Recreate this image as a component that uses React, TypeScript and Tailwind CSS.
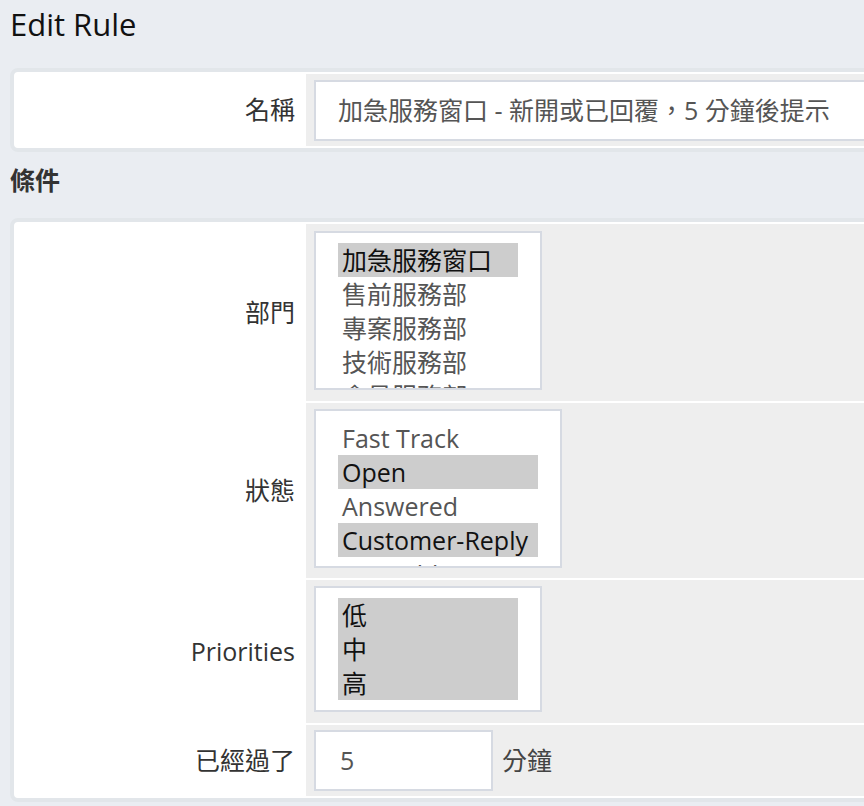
const font = { fontFamily: '"Open Sans", "Noto Sans CJK TC", sans-serif' };

function Label({ children }: { children: React.ReactNode }) {
  return (
    <div className="w-[288px] shrink-0 flex items-center justify-end pr-[9px] text-[25px] text-[#333]">
      {children}
    </div>
  );
}

function ListBox({ items, selected, width }: { items: string[]; selected: number[]; width: string }) {
  return (
    <div className={`${width} h-[159px] border-2 border-[#d6dae2] bg-white px-[22px] pt-[10px] overflow-hidden`}>
      {items.map((item, i) => (
        <div
          key={item}
          className={`h-[34px] leading-[34px] pl-[4px] text-[25px] whitespace-nowrap ${
            selected.includes(i) ? "bg-[#cdcdcd] text-[#111]" : "text-[#555]"
          }`}
        >
          {item}
        </div>
      ))}
    </div>
  );
}

export default function App() {
  return (
    <div className="min-h-screen w-full overflow-hidden bg-[#eaedf2]" style={font}>
      <div className="w-[1000px] pl-[10px]">
        <h1 className="pt-[4px] h-[44px] leading-[40px] text-[31px] text-[#111] mb-[24px]">Edit Rule</h1>

        <div className="border-4 border-[#e2e6ea] rounded-lg bg-white p-[2px]">
          <div className="flex gap-[2px]">
            <Label>名稱</Label>
            <div className="flex-1 bg-[#eeeeee] px-[8px] pt-[6px] pb-[5px]">
              <div className="w-[640px] h-[61px] border-2 border-[#d6dae2] bg-white pl-[22px] flex items-center text-[25px] text-[#555] whitespace-nowrap">
                加急服務窗口 - 新開或已回覆，5 分鐘後提示
              </div>
            </div>
          </div>
        </div>

        <h2 className="mt-[10px] h-[36px] leading-[36px] text-[25px] font-bold text-[#333] mb-[20px]">條件</h2>

        <div className="border-4 border-[#e2e6ea] rounded-lg bg-white p-[2px] flex flex-col gap-[2px]">
          <div className="flex gap-[2px]">
            <Label>部門</Label>
            <div className="flex-1 bg-[#eeeeee] px-[8px] pt-[7px] pb-[11px]">
              <ListBox
                width="w-[228px]"
                items={["加急服務窗口", "售前服務部", "專案服務部", "技術服務部", "會員服務部"]}
                selected={[0]}
              />
            </div>
          </div>
          <div className="flex gap-[2px]">
            <Label>狀態</Label>
            <div className="flex-1 bg-[#eeeeee] px-[8px] pt-[6px] pb-[10px]">
              <ListBox
                width="w-[248px]"
                items={["Fast Track", "Open", "Answered", "Customer-Reply", "On Hold"]}
                selected={[1, 3]}
              />
            </div>
          </div>
          <div className="flex gap-[2px]">
            <Label>Priorities</Label>
            <div className="flex-1 bg-[#eeeeee] px-[8px] pt-[6px] pb-[11px]">
              <div className="w-[228px] h-[126px] border-2 border-[#d6dae2] bg-white px-[22px] pt-[10px]">
                {["低", "中", "高"].map((p) => (
                  <div key={p} className="h-[34px] leading-[34px] pl-[4px] text-[25px] bg-[#cdcdcd] text-[#111]">
                    {p}
                  </div>
                ))}
              </div>
            </div>
          </div>
          <div className="flex gap-[2px]">
            <Label>已經過了</Label>
            <div className="flex-1 bg-[#eeeeee] px-[8px] py-[5px] flex items-center gap-[9px]">
              <div className="w-[179px] h-[61px] border-2 border-[#d6dae2] bg-white pl-[24px] flex items-center text-[25px] text-[#555]">
                5
              </div>
              <span className="text-[25px] text-[#444]">分鐘</span>
            </div>
          </div>
        </div>
      </div>
    </div>
  );
}
